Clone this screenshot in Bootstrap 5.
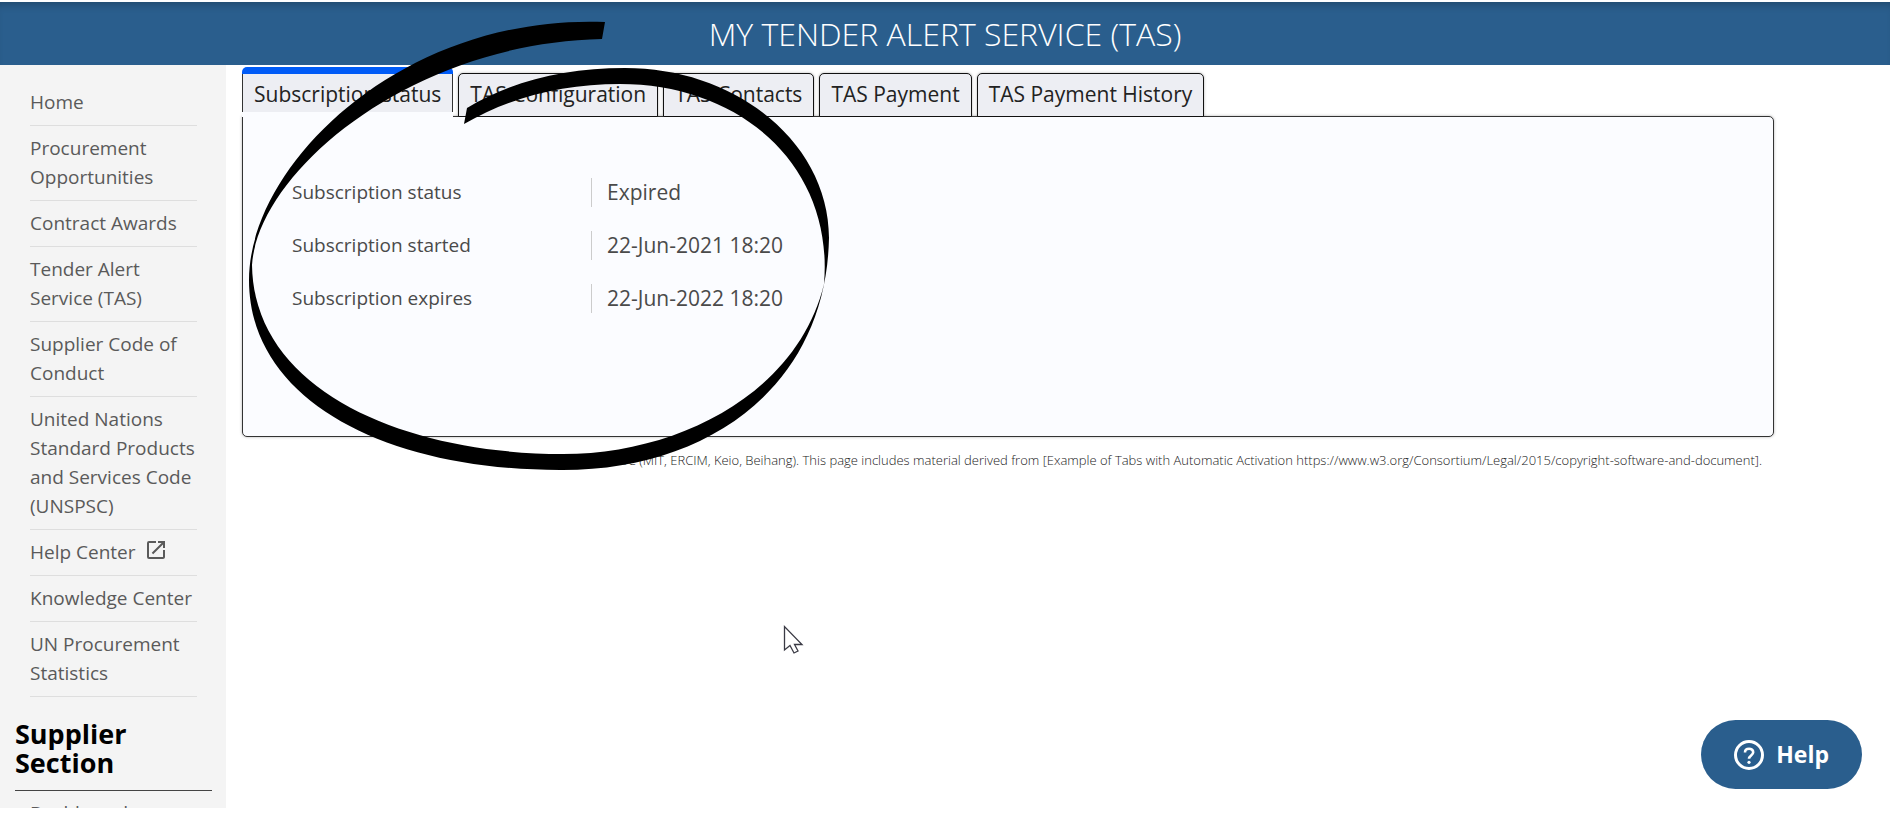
<!DOCTYPE html>
<html lang="en">
<head>
<meta charset="utf-8">
<meta name="viewport" content="width=device-width, initial-scale=1">
<title>My Tender Alert Service (TAS)</title>
<link href="https://cdn.jsdelivr.net/npm/bootstrap@5.3.0/dist/css/bootstrap.min.css" rel="stylesheet">
<style>
  body { font-family: "Open Sans", "Noto Sans", sans-serif; color: #4a4a4a; background: #fff; padding: 2px 0 14px; }
  .page-head { background: #2a5e8d; box-shadow: inset 0 8px 8px -6px rgba(0,0,0,.25); height: 63px; }
  .page-head h1 { font-size: 32px; font-weight: 300; line-height: 63px; color: #fff; }
  .side { width: 226px; background: #f4f4f4; padding: 15px 14px 0 15px; font-size: 19px; line-height: 29px; }
  .side ul { margin: 0 15px; }
  .side li { border-bottom: 1px solid #dedede; padding: 8px 0; }
  .side a { color: #5a5a5a; text-decoration: none; }
  .side h2 { font-size: 27px; font-weight: 700; line-height: 29px; color: #000; margin: 22px 0 0; padding-bottom: 13px; border-bottom: 1px solid #444; }
  .content-col { padding: 2px 116px 0 16px; }
  .tab-row { gap: 5px; position: relative; z-index: 1; margin-bottom: -1px; }
  .tab-btn { height: 44px; border: 1px solid #111; border-radius: 5px 5px 0 0; background: #edeef3; color: #222; font-size: 21px; line-height: 30px; padding: 0 11px 3px; box-shadow: 0 0 3px rgba(0,0,0,.3); clip-path: inset(-4px -4px 0 -4px); }
  .tab-btn.active { height: 50px; padding: 0; border: 0; border-top: 7px solid #005bf7; background: #fbfcff; clip-path: none; box-shadow: none; }
  .tab-btn.active span { display: block; height: 38px; margin-bottom: 5px; padding: 0 11px; border: solid #333; border-width: 0 1px; background: #edeef3; line-height: 40px; }
  .sheet { border: 1px solid #333; border-radius: 0 5px 5px 5px; background: #fbfcff; padding: 61px 50px 123px 49px; box-shadow: 0 0 3px rgba(0,0,0,.3); }
  .facts { display: grid; grid-template-columns: 299px 1fr; row-gap: 24px; margin: 0; line-height: 29px; }
  .facts dt { font-size: 19px; font-weight: 400; }
  .facts dd { font-size: 21px; margin: 0; padding-left: 15px; border-left: 1px solid #ccc; }
  .legal { font-size: 13px; font-weight: 300; line-height: 18px; color: #222; margin: 14px 12px 0 0; }
  .help-btn { position: fixed; right: 28px; bottom: 33px; height: 69px; padding: 0 33px; border: 0; border-radius: 35px; background: #2a5e8d; color: #fff; font-size: 23px; font-weight: 700; gap: 12px; }
  .ink { position: absolute; left: 0; top: 0; pointer-events: none; z-index: 5; }
</style>
</head>
<body class="vh-100 d-flex flex-column overflow-hidden position-relative">
<header class="page-head text-center flex-shrink-0"><h1 class="m-0">MY TENDER ALERT SERVICE (TAS)</h1></header>
<div class="d-flex flex-grow-1 overflow-hidden">
  <nav class="side flex-shrink-0 overflow-hidden" aria-label="Main">
    <ul class="list-unstyled">
      <li><a href="#">Home</a></li>
      <li><a href="#">Procurement Opportunities</a></li>
      <li><a href="#">Contract Awards</a></li>
      <li><a href="#">Tender Alert Service (TAS)</a></li>
      <li><a href="#">Supplier Code of Conduct</a></li>
      <li><a href="#">United Nations Standard Products and Services Code (UNSPSC)</a></li>
      <li class="d-flex"><a href="#" class="d-flex gap-2">Help Center
        <svg width="24" height="24" viewBox="0 0 24 24" fill="#5a5a5a" aria-hidden="true"><path d="M19 19H5V5h7V3H5a2 2 0 0 0-2 2v14a2 2 0 0 0 2 2h14c1.100 0 2-.9 2-2v-7h-2v7zM14 3v2h3.590l-9.830 9.830 1.410 1.410L19 6.410V10h2V3h-7z"/></svg></a></li>
      <li><a href="#">Knowledge Center</a></li>
      <li><a href="#">UN Procurement Statistics</a></li>
    </ul>
    <h2>Supplier Section</h2>
    <ul class="list-unstyled"><li><a href="#">Dashboard</a></li></ul>
  </nav>
  <main class="content-col flex-grow-1">
    <div class="tab-row d-flex align-items-end" role="tablist">
      <button type="button" role="tab" class="tab-btn active" aria-selected="true"><span>Subscription status</span></button>
      <button type="button" role="tab" class="tab-btn">TAS Configuration</button>
      <button type="button" role="tab" class="tab-btn">TAS Contacts</button>
      <button type="button" role="tab" class="tab-btn">TAS Payment</button>
      <button type="button" role="tab" class="tab-btn">TAS Payment History</button>
    </div>
    <section class="sheet" role="tabpanel">
      <dl class="facts">
        <dt>Subscription status</dt><dd>Expired</dd>
        <dt>Subscription started</dt><dd>22-Jun-2021 18:20</dd>
        <dt>Subscription expires</dt><dd>22-Jun-2022 18:20</dd>
      </dl>
    </section>
    <p class="legal text-end">Copyright © 2019 W3C (MIT, ERCIM, Keio, Beihang). This page includes material derived from [Example of Tabs with Automatic Activation https://www.w3.org/Consortium/Legal/2015/copyright-software-and-document].</p>
  </main>
</div>
<button type="button" class="help-btn d-flex align-items-center">
  <svg width="30" height="30" viewBox="0 0 30 30" fill="none" stroke="#fff" stroke-width="3" aria-hidden="true"><circle cx="15" cy="15" r="13.500"/><path d="M11 12.500c0-5 8.200-4.800 8.200-.3 0 3.200-4.200 3.300-4.200 6.600" stroke-width="2.600"/><circle cx="15" cy="22.300" r="1.600" fill="#fff" stroke="none"/></svg>
  Help
</button>
<svg class="ink" width="840" height="680" viewBox="0 0 840 680" aria-hidden="true">
  <path d="M605 22C400 14 249 166 249 280C249 400 385 470 560 470C706 471 826 388 829 238C829 144 738 68 625 68C565 68 512 81 467 108L464 124C510 97 563 84 620 84C740 84 834 165 824 284C798 392 680 454 563 454C410 454 254 394 252 265C258 172 410 43 602 39Z"/>
  <path d="M784.500 626.500v23.500l5.500-4.500 4 7.500 4-2-3.500-6.500h7.500z" fill="#fff" stroke="#3a3a44" stroke-width="1.300"/>
</svg>
<script src="https://cdn.jsdelivr.net/npm/bootstrap@5.3.0/dist/js/bootstrap.bundle.min.js"></script>
</body>
</html>
